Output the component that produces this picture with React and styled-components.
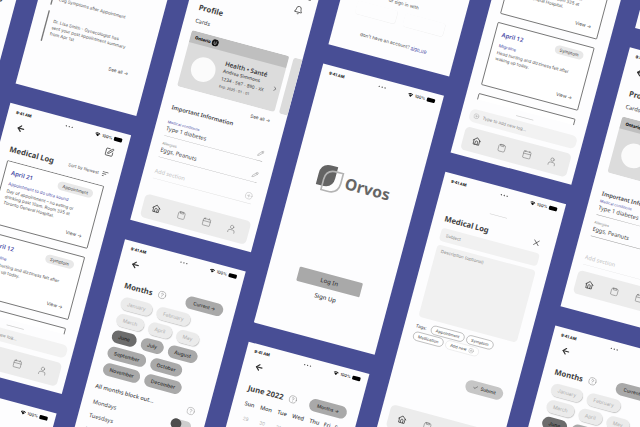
import React from "react";
import styled, { createGlobalStyle, css } from "styled-components";
import {
  ArrowLeft,
  SquarePen,
  Bell,
  Pencil,
  CircleHelp,
  CirclePlus,
  Check,
  ChevronRight,
  X,
} from "lucide-react";

const heading = '"Noto Sans", "Open Sans", sans-serif';
const body = 'Inter, "Liberation Sans", sans-serif';

const GlobalStyle = createGlobalStyle`
  *, *::before, *::after { box-sizing: border-box; }
  body { margin: 0; background: #484e95; }
  button, input, textarea { font: inherit; color: inherit; }
  h2, h3, p, ul { margin: 0; padding: 0; }
  a { color: inherit; text-decoration: none; }
`;

/* ---------- Board: rotated wall of 375px wide phone screens ---------- */

const Stage = styled.main`
  height: 100vh;
  overflow: hidden;
  background: #484e95;
`;

const Board = styled.div`
  display: flex;
  align-items: flex-start;
  gap: 63px;
  width: max-content;
  transform-origin: 0 0;
  transform: rotate(15deg) scale(calc(1 / 3)) translate(-328px, -1216px);
`;

const Column = styled.div`
  display: flex;
  flex-direction: column;
  gap: 60px;
  margin-top: ${(p) => p.$shift}px;
`;

const PhoneFrame = styled.section`
  display: flex;
  flex-direction: column;
  width: 375px;
  height: 804px;
  overflow: hidden;
  background: #fdfdfe;
  color: #3c3c3e;
  font-family: ${body};
  font-size: 13px;
  line-height: 18px;
`;

/* ---------- Status bar ---------- */

const StatusRow = styled.div`
  display: grid;
  grid-template-columns: 1fr auto 1fr;
  align-items: center;
  flex: none;
  height: 46px;
  padding: 0 22px 0 24px;
  color: #111;
  font-size: 12px;
  font-weight: 700;
`;

const Dots = styled.div`
  display: flex;
  gap: 5px;
  i {
    width: 4px;
    height: 4px;
    border-radius: 50%;
    background: #555;
  }
`;

const StatusRight = styled.div`
  display: flex;
  align-items: center;
  justify-content: flex-end;
  gap: 5px;
  font-weight: 500;
`;

const Battery = styled.span`
  width: 25px;
  height: 12px;
  border-radius: 3px;
  background: #000;
`;

function StatusBar() {
  return (
    <StatusRow>
      <span>9:41 AM</span>
      <Dots>
        <i />
        <i />
        <i />
      </Dots>
      <StatusRight>
        <svg width="17" height="13" viewBox="0 0 17 13" aria-hidden="true">
          <path d="M0.5 4 Q8.5 -3 16.5 4 L14.5 6 Q8.5 1 2.5 6 Z M3.5 7 Q8.5 3 13.5 7 L8.5 12.5 Z" fill="#111" />
        </svg>
        <span>100%</span>
        <Battery />
      </StatusRight>
    </StatusRow>
  );
}

function Phone({ label, children }) {
  return (
    <PhoneFrame aria-label={label}>
      <StatusBar />
      {children}
    </PhoneFrame>
  );
}

/* ---------- Shared parts ---------- */

const TopRow = styled.div`
  display: flex;
  align-items: center;
  justify-content: space-between;
  flex: none;
  height: 40px;
  padding: 0 36px;
`;

const IconButton = styled.button`
  display: flex;
  padding: 0;
  border: 0;
  background: none;
  color: ${(p) => p.$tone || "#333"};
`;

const TitleRow = styled.div`
  display: flex;
  align-items: center;
  gap: 16px;
  flex: none;
  height: 46px;
  margin-top: 24px;
  padding: 0 35px 0 34px;
`;

const Title = styled.h2`
  font-family: ${heading};
  font-size: 23px;
  font-weight: 700;
  line-height: 30px;
  color: #3d3d40;
  white-space: nowrap;
`;

const Spacer = styled.span`
  flex: 1;
`;

const TextLink = styled.a`
  font-family: ${body};
  font-size: 14px;
  line-height: 18px;
  color: #444;
  white-space: nowrap;
`;

const Handle = styled.div`
  flex: none;
  align-self: center;
  width: 54px;
  height: 2px;
  border-radius: 1px;
  background: #cfcfcf;
`;

const NavBar = styled.nav`
  display: flex;
  align-items: center;
  justify-content: space-between;
  flex: none;
  height: 72px;
  margin: auto 22px ${(p) => p.$bottom || 17}px 25px;
  padding: 0 38px 0 28px;
  border-radius: 14px;
  background: #ececec;
  a {
    display: flex;
  }
`;

function Stroke({ tone = "#777", width = 1.6, children }) {
  return (
    <svg
      width="28"
      height="28"
      viewBox="0 0 28 28"
      fill="none"
      stroke={tone}
      strokeWidth={width}
      strokeLinecap="round"
      strokeLinejoin="round"
      aria-hidden="true"
    >
      {children}
    </svg>
  );
}

function Navigation({ bottom }) {
  return (
    <NavBar $bottom={bottom}>
      <a href="#home" aria-label="Home">
        <Stroke tone="#333" width={2}>
          <path d="M3 13 L14 3.5 L25 13 M5.5 11.5 V24.5 H22.5 V11.5" />
          <path d="M10.5 24 V17 Q10.5 13.5 14 13.5 Q17.5 13.5 17.5 17 V24" />
        </Stroke>
      </a>
      <a href="#log" aria-label="Log">
        <Stroke>
          <rect x="4" y="5" width="20" height="20" rx="4" />
          <path d="M9 8 V4 H19 V8 Z" />
        </Stroke>
      </a>
      <a href="#calendar" aria-label="Calendar">
        <Stroke>
          <rect x="3" y="5" width="22" height="20" rx="2" />
          <path d="M3 12 H25 M8 2.5 V6 M20 2.5 V6" />
        </Stroke>
      </a>
      <a href="#me" aria-label="Me">
        <Stroke>
          <circle cx="14" cy="8.5" r="5" />
          <path d="M4.5 25.5 V22 Q4.5 17 10 17 H18 Q23.5 17 23.5 22 V25.5" />
        </Stroke>
      </a>
    </NavBar>
  );
}

function BackButton() {
  return (
    <IconButton aria-label="Back">
      <ArrowLeft size={29} strokeWidth={3} />
    </IconButton>
  );
}

/* ---------- Medical log ---------- */

const SortButton = styled.button`
  display: flex;
  align-items: center;
  gap: 10px;
  padding: 0;
  border: 0;
  background: none;
  color: #555;
  font-size: 13px;
  white-space: nowrap;
`;

const Feed = styled.div`
  display: flex;
  flex-direction: column;
  gap: 26px;
  flex: 1;
  min-height: 0;
  margin-top: 12px;
  padding: 0 39px 0 36px;
  overflow: hidden;
`;

const Entry = styled.article`
  display: flex;
  flex-direction: column;
  flex: none;
  height: 195px;
  padding: 18px 24px 21px 19px;
  border: 2px solid #444;
  border-radius: 3px;
  background: #fff;
  color: #555;
`;

const EntryHead = styled.div`
  display: flex;
  align-items: center;
  justify-content: space-between;
  height: 26px;
`;

const EntryDate = styled.h3`
  font-family: ${heading};
  font-size: 18px;
  font-weight: 600;
  color: #4b4ea6;
`;

const EntryTag = styled.span`
  padding: 4px 15px;
  border-radius: 13px;
  background: #e8e8e8;
  color: #444;
`;

const EntrySubject = styled.p`
  margin-top: 12px;
  color: #4b4ea6;
`;

const EntryText = styled.p`
  margin-top: 4px;
  margin-right: -12px;
  white-space: pre-line;
`;

const EntryFoot = styled.div`
  display: flex;
  justify-content: flex-end;
  margin-top: auto;
`;

const Composer = styled.div`
  display: flex;
  flex-direction: column;
  flex: none;
  height: 175px;
  padding-top: 16px;
`;

const QuickAdd = styled.label`
  display: flex;
  align-items: center;
  gap: 8px;
  height: 40px;
  margin: 12px 18px 0 26px;
  padding: 0 12px;
  border-radius: 16px;
  background: #f2f2f2;
  color: #999;
  input {
    flex: 1;
    min-width: 0;
    border: 0;
    background: none;
  }
  input::placeholder {
    color: #888;
    opacity: 1;
  }
`;

const entries = [
  {
    date: "April 21",
    tag: "Appointment",
    subject: "Appointment to do ultra sound",
    text: "Day of appointment – no eating or\ndrinking past 10am. Room 335 at\nToronto General Hospital.",
  },
  {
    date: "April 12",
    tag: "Symptom",
    subject: "Migraine",
    text: "Head hurting and dizziness felt after\nwaking up today.",
  },
  { date: "April 3", tag: "Medication", subject: "Refill", text: "Pick up the refill." },
];

function MedicalLog() {
  return (
    <Phone label="Medical Log">
      <TopRow>
        <BackButton />
        <IconButton aria-label="New entry">
          <SquarePen size={28} strokeWidth={1.8} />
        </IconButton>
      </TopRow>
      <TitleRow>
        <Title>Medical Log</Title>
        <Spacer />
        <SortButton>
          Sort by Newest
          <svg width="20" height="16" viewBox="0 0 20 16" stroke="#444" strokeWidth="2" aria-hidden="true">
            <path d="M1 2 H19 M1 8 H13 M1 14 H7" />
          </svg>
        </SortButton>
      </TitleRow>
      <Feed>
        {entries.map((e) => (
          <Entry key={e.date}>
            <EntryHead>
              <EntryDate>{e.date}</EntryDate>
              <EntryTag>{e.tag}</EntryTag>
            </EntryHead>
            <EntrySubject>{e.subject}</EntrySubject>
            <EntryText>{e.text}</EntryText>
            <EntryFoot>
              <TextLink href="#entry">View →</TextLink>
            </EntryFoot>
          </Entry>
        ))}
      </Feed>
      <Composer>
        <Handle />
        <QuickAdd>
          <CirclePlus size={18} strokeWidth={1.4} />
          <input placeholder="Type to add new log..." aria-label="Add new log" />
        </QuickAdd>
        <Navigation />
      </Composer>
    </Phone>
  );
}

/* ---------- Profile ---------- */

const SubTitle = styled.p`
  flex: none;
  margin-top: 7px;
  padding-left: 34px;
  font-family: ${heading};
  font-size: 17px;
  line-height: 24px;
`;

const CardStrip = styled.div`
  display: flex;
  gap: 14px;
  flex: none;
  height: 174px;
  margin-top: 19px;
  padding-left: 32px;
  overflow: hidden;
`;

const HealthCard = styled.article`
  flex: none;
  width: 302px;
  overflow: hidden;
  border-radius: 8px;
  background: #dcdcdc;
`;

const CardBand = styled.div`
  display: flex;
  align-items: center;
  gap: 3px;
  height: 37px;
  padding-left: 15px;
  background: #bfbfbf;
  color: #111;
  font-size: 13px;
  font-weight: 800;
`;

const CardBody = styled.div`
  display: flex;
  align-items: center;
  height: 137px;
  padding: 0 6px 0 26px;
`;

const Avatar = styled.div`
  flex: none;
  width: 74px;
  height: 74px;
  border-radius: 50%;
  background: #fbfbfb;
`;

const CardText = styled.div`
  flex: 1;
  margin-left: 22px;
  font-family: ${heading};
  font-size: 14px;
  line-height: 25px;
  white-space: nowrap;
`;

const CardName = styled.h3`
  font-size: 19px;
  font-weight: 600;
  line-height: 24px;
`;

const CardHolder = styled.p`
  font-weight: 500;
  line-height: 22px;
`;

const CardNote = styled.p`
  font-size: 11px;
  line-height: 22px;
`;

const LinkRow = styled.div`
  flex: none;
  margin-top: 20px;
  padding-right: 46px;
  text-align: right;
`;

const SectionTitle = styled.h3`
  flex: none;
  margin-top: 15px;
  padding-left: 33px;
  font-family: ${heading};
  font-size: 17px;
  font-weight: 600;
  line-height: 24px;
`;

const FieldList = styled.div`
  flex: none;
  margin: ${(p) => (p.$compact ? 0 : 22)}px 38px 0 33px;
`;

const Field = styled.label`
  display: grid;
  grid-template-columns: 1fr auto;
  align-content: end;
  align-items: center;
  height: ${(p) => (p.$tall ? 88 : 66)}px;
  padding-bottom: 10px;
  border-bottom: 1px solid ${(p) => (p.$muted ? "#ddd" : "#999")};
  color: ${(p) => (p.$muted ? "#c4c4c4" : "#666")};
  &:first-child {
    height: 54px;
  }
  small {
    grid-column: 1 / -1;
    font-size: 11px;
    line-height: 16px;
    color: ${(p) => (p.$accent ? "#4b4ea6" : "#888")};
  }
  input {
    min-width: 0;
    padding: 0;
    border: 0;
    background: none;
    font-family: ${heading};
    font-size: 17px;
    line-height: 24px;
    color: ${(p) => (p.$muted ? "#c4c4c4" : "#444")};
  }
  input::placeholder {
    color: #c4c4c4;
    opacity: 1;
  }
`;

function Profile({ compact = false }) {
  return (
    <Phone label="Profile">
      <TopRow>
        <BackButton />
        <IconButton aria-label="Notifications">
          <Bell size={28} strokeWidth={1.8} />
        </IconButton>
      </TopRow>
      <TitleRow>
        <Title>Profile</Title>
      </TitleRow>
      <SubTitle>Cards</SubTitle>
      <CardStrip>
        <HealthCard>
          <CardBand>
            Ontario
            <svg width="22" height="22" viewBox="0 0 22 22" aria-hidden="true">
              <circle cx="11" cy="11" r="10.5" fill="#111" />
              <path
                d="M11 17 C6 15 5 11 8 9 C10 10 11 13 11 17 C11 13 12 10 14 9 C17 11 16 15 11 17 Z M6 6 L9 8 M16 6 L13 8"
                fill="none"
                stroke="#bfbfbf"
                strokeWidth="1.2"
              />
            </svg>
          </CardBand>
          <CardBody>
            <Avatar />
            <CardText>
              <CardName>Health • Santé</CardName>
              <CardHolder>Andrea Simmons</CardHolder>
              <p>1234 - 567 - 890 - XX</p>
              <CardNote>Exp. 2025 - 01 - 01</CardNote>
            </CardText>
            <ChevronRight size={20} strokeWidth={1.8} />
          </CardBody>
        </HealthCard>
        <HealthCard />
      </CardStrip>
      <LinkRow>
        <TextLink href="#cards">See all →</TextLink>
      </LinkRow>
      <SectionTitle>Important Information</SectionTitle>
      <FieldList $compact={compact}>
        <Field $accent>
          <small>Medical conditions</small>
          <input defaultValue="Type 1 diabetes" />
          <Pencil size={20} strokeWidth={1.2} />
        </Field>
        <Field>
          <small>Allergies</small>
          <input defaultValue="Eggs, Peanuts" />
          <Pencil size={20} strokeWidth={1.2} />
        </Field>
        <Field $muted $tall={compact}>
          <input placeholder="Add section" aria-label="Add section" />
          <CirclePlus size={24} strokeWidth={1.2} color="#aaa" />
        </Field>
      </FieldList>
      <Navigation bottom={compact ? 48 : 17} />
    </Phone>
  );
}

/* ---------- Months ---------- */

const PillButton = styled.button`
  display: flex;
  align-items: center;
  justify-content: center;
  gap: 8px;
  flex: none;
  min-width: 116px;
  height: 38px;
  padding: 0 20px;
  border: 0;
  border-radius: 19px;
  background: ${(p) => (p.$light ? "#c6c6c6" : "#a9a9a9")};
  color: #333;
  font-size: 14px;
  font-weight: 500;
`;

const MonthRows = styled.div`
  display: flex;
  flex-direction: column;
  gap: 12px;
  flex: none;
  margin-top: 11px;
  padding: 0 34px 0 37px;
`;

const MonthRow = styled.div`
  display: flex;
  gap: 14px;
`;

const monthTones = {
  off: css`
    background: #ebebeb;
    color: #b0b0b0;
    box-shadow: 2px 2px 3px #c4c4c4;
  `,
  on: css`
    background: #a9a9a9;
    color: #2e2e2e;
    font-weight: 500;
  `,
  current: css`
    background: #6c6c6c;
    color: #1c1c1c;
    font-weight: 500;
  `,
};

const Month = styled.button`
  height: 39px;
  padding: 0 20px;
  border: 0;
  border-radius: 20px;
  font-size: 15px;
  ${(p) => monthTones[p.$tone]}
`;

const BlockHead = styled.div`
  display: flex;
  align-items: center;
  justify-content: space-between;
  flex: none;
  height: 30px;
  margin-top: 22px;
  padding: 0 38px 0 28px;
  font-family: ${heading};
  font-size: 17px;
  font-weight: 500;
  line-height: 24px;
`;

const DayRow = styled.label`
  display: flex;
  align-items: center;
  justify-content: space-between;
  flex: none;
  height: 42px;
  margin-top: ${(p) => (p.$first ? 12 : 0)}px;
  padding: 0 38px 0 33px;
  font-family: ${heading};
  font-size: 17px;
`;

const Switch = styled.input`
  appearance: none;
  display: flex;
  align-items: center;
  width: 62px;
  height: 30px;
  margin: 0;
  border-radius: 15px;
  background: #cdcdcd;
  &::before {
    content: "";
    width: 32px;
    height: 32px;
    border-radius: 50%;
    background: #4d4d4d;
  }
`;

const monthRows = [
  [["January", "off"], ["February", "off"]],
  [["March", "off"], ["April", "off"], ["May", "off"]],
  [["June", "current"], ["July", "on"], ["August", "on"]],
  [["September", "on"], ["October", "on"]],
  [["November", "on"], ["December", "on"]],
];

const weekdays = ["Mondays", "Tuesdays", "Wednesdays", "Thursdays"];

function Months() {
  return (
    <Phone label="Months">
      <TopRow>
        <BackButton />
      </TopRow>
      <TitleRow>
        <Title>Months</Title>
        <IconButton aria-label="Help" $tone="#888">
          <CircleHelp size={26} strokeWidth={1.4} />
        </IconButton>
        <Spacer />
        <PillButton>Current →</PillButton>
      </TitleRow>
      <MonthRows>
        {monthRows.map((row) => (
          <MonthRow key={row[0][0]}>
            {row.map(([name, tone]) => (
              <Month key={name} $tone={tone}>
                {name}
              </Month>
            ))}
          </MonthRow>
        ))}
      </MonthRows>
      <BlockHead>
        All months block out...
        <IconButton aria-label="Help" $tone="#999">
          <CircleHelp size={26} strokeWidth={1.4} />
        </IconButton>
      </BlockHead>
      {weekdays.map((day, i) => (
        <DayRow key={day} $first={i === 0}>
          {day}
          <Switch type="checkbox" />
        </DayRow>
      ))}
    </Phone>
  );
}

/* ---------- Calendar ---------- */

const MonthTable = styled.table`
  flex: none;
  table-layout: fixed;
  margin: 10px 28px 0;
  border-collapse: collapse;
  text-align: center;
  th {
    height: 30px;
    padding: 0;
    font-family: ${heading};
    font-size: 17px;
    font-weight: 500;
  }
  td {
    height: 60px;
    padding: 0;
    color: #b5b5b5;
    font-size: 14px;
  }
`;

const weeks = [
  [29, 30, 31, 1, 2, 3, 4],
  [5, 6, 7, 8, 9, 10, 11],
  [12, 13, 14, 15, 16, 17, 18],
];

function Calendar() {
  return (
    <Phone label="June 2022">
      <TopRow>
        <BackButton />
      </TopRow>
      <TitleRow>
        <Title>June 2022</Title>
        <IconButton aria-label="Help" $tone="#888">
          <CircleHelp size={26} strokeWidth={1.4} />
        </IconButton>
        <Spacer />
        <PillButton>Months →</PillButton>
      </TitleRow>
      <MonthTable>
        <thead>
          <tr>
            {["Sun", "Mon", "Tue", "Wed", "Thu", "Fri", "Sat"].map((d) => (
              <th key={d}>{d}</th>
            ))}
          </tr>
        </thead>
        <tbody>
          {weeks.map((week) => (
            <tr key={week[0]}>
              {week.map((d) => (
                <td key={d}>{d}</td>
              ))}
            </tr>
          ))}
        </tbody>
      </MonthTable>
    </Phone>
  );
}

/* ---------- Welcome and sign in ---------- */

const Brand = styled.div`
  display: flex;
  align-items: center;
  gap: 7px;
  flex: none;
  height: 90px;
  margin-top: 238px;
  padding-left: 70px;
  font-family: ${heading};
  font-size: 47px;
  font-weight: 700;
  line-height: 60px;
  color: #666;
`;

const WelcomeActions = styled.div`
  display: flex;
  flex-direction: column;
  align-items: center;
  gap: 18px;
  margin-top: 232px;
  font-family: ${heading};
  font-size: 18px;
  font-weight: 500;
`;

const LoginButton = styled.button`
  width: 196px;
  height: 44px;
  border: 0;
  border-radius: 4px;
  background: #a9a9a9;
`;

function Welcome() {
  return (
    <Phone label="Welcome">
      <Brand>
        <svg width="80" height="86" viewBox="0 0 80 86" aria-hidden="true">
          <path d="M2 69 V35 Q2 3 36 3 H54 V38 Q54 69 20 69 Z" fill="#646464" />
          <path d="M21 81 V48 Q22 18 54 18 H74 V50 Q73 81 41 81 Z" fill="none" stroke="#b4b4b4" strokeWidth="5" />
        </svg>
        Orvos
      </Brand>
      <WelcomeActions>
        <LoginButton>Log In</LoginButton>
        <a href="#signup">Sign Up</a>
      </WelcomeActions>
    </Phone>
  );
}

const SignInFoot = styled.div`
  display: flex;
  flex-direction: column;
  align-items: center;
  margin-top: auto;
  padding-bottom: 45px;
  color: #555;
  font-size: 14px;
  a {
    color: #4b4ea6;
    text-decoration: underline;
  }
`;

const SocialRow = styled.div`
  display: flex;
  gap: 24px;
  margin: 16px 0 47px;
`;

const SocialButton = styled.button`
  width: 124px;
  height: 40px;
  border: 0;
  border-radius: 8px;
  background: #fdfdfe;
  box-shadow: 1px 1px 2px #ececec;
`;

function SignIn() {
  return (
    <Phone label="Sign in">
      <SignInFoot>
        <p>or sign in with</p>
        <SocialRow>
          <SocialButton aria-label="First provider" />
          <SocialButton aria-label="Second provider" />
        </SocialRow>
        <p>
          don’t have an account? <a href="#signup">sign up</a>
        </p>
      </SignInFoot>
    </Phone>
  );
}

/* ---------- Home ---------- */

const HomeFoot = styled.div`
  display: flex;
  flex-direction: column;
  gap: 18px;
  margin-top: auto;
  padding: 0 46px 106px 39px;
`;

const Notice = styled.p`
  display: flex;
  align-items: center;
  height: ${(p) => (p.$tall ? 94 : 44)}px;
  padding-left: 18px;
  border-left: 4px solid #777;
  color: #555;
  font-size: 13px;
  line-height: 19px;
  white-space: pre;
`;

const HomeLink = styled.div`
  margin-top: 2px;
  padding-right: 10px;
  text-align: right;
`;

function Home() {
  return (
    <Phone label="Home">
      <HomeFoot>
        <Notice>Log Symptoms after Appointment</Notice>
        <Notice $tall>
          {"Dr. Lisa Smith - Gynecologist has\nsent your post appointment summary\nfrom Apr 1st"}
        </Notice>
        <HomeLink>
          <TextLink href="#notices">See all →</TextLink>
        </HomeLink>
      </HomeFoot>
    </Phone>
  );
}

const Greeting = styled(Title)`
  margin: 380px 36px 0 auto;
`;

function Today() {
  return (
    <Phone label="Today">
      <Greeting>Today</Greeting>
    </Phone>
  );
}

/* ---------- New log entry ---------- */

const FormHandle = styled(Handle)`
  margin-top: 40px;
`;

const FormTitleRow = styled(TitleRow)`
  padding-right: 42px;
`;

const SubjectInput = styled.input`
  flex: none;
  height: 40px;
  margin: 6px 37px 0 34px;
  padding: 0 17px;
  border: 0;
  border-radius: 12px;
  background: #f1f1f1;
  &::placeholder {
    color: #888;
    opacity: 1;
  }
`;

const DescriptionInput = styled.textarea`
  flex: none;
  height: 224px;
  margin: 12px 36px 0 34px;
  padding: 8px 15px;
  border: 0;
  border-radius: 12px;
  background: #f1f1f1;
  resize: none;
  &::placeholder {
    color: #888;
    opacity: 1;
  }
`;

const TagRow = styled.div`
  display: flex;
  align-items: center;
  gap: 7px;
  flex: none;
  margin: ${(p) => (p.$first ? 14 : 4)}px 0 0 34px;
`;

const TagLabel = styled.span`
  width: 40px;
`;

const TagButton = styled.button`
  display: flex;
  align-items: center;
  gap: 6px;
  height: 27px;
  padding: 0 14px;
  border: 1px solid ${(p) => (p.$ghost ? "#d4d4d4" : "#555")};
  border-radius: 14px;
  background: #fff;
  font-size: 12px;
`;

const SubmitRow = styled.div`
  display: flex;
  justify-content: flex-end;
  margin-top: 71px;
  padding-right: 35px;
`;

function NewLog() {
  return (
    <Phone label="New log">
      <FormHandle />
      <FormTitleRow>
        <Title>Medical Log</Title>
        <Spacer />
        <IconButton aria-label="Close">
          <X size={28} strokeWidth={1.6} />
        </IconButton>
      </FormTitleRow>
      <SubjectInput placeholder="Subject" aria-label="Subject" />
      <DescriptionInput placeholder="Description (optional)" aria-label="Description" />
      <TagRow $first>
        <TagLabel>Tags:</TagLabel>
        <TagButton>Appointment</TagButton>
        <TagButton>Symptom</TagButton>
      </TagRow>
      <TagRow>
        <TagButton>Medication</TagButton>
        <TagButton $ghost>
          Add new <CirclePlus size={17} strokeWidth={1.4} color="#888" />
        </TagButton>
      </TagRow>
      <SubmitRow>
        <PillButton $light>
          <Check size={16} strokeWidth={1.8} />
          Submit
        </PillButton>
      </SubmitRow>
      <Navigation />
    </Phone>
  );
}

export default function App() {
  return (
    <>
      <GlobalStyle />
      <Stage>
        <Board>
          <Column $shift={765}>
            <Today />
          </Column>
          <Column $shift={642}>
            <Home />
            <MedicalLog />
            <Months />
          </Column>
          <Column $shift={948}>
            <Profile />
            <Months />
          </Column>
          <Column $shift={285}>
            <SignIn />
            <Welcome />
            <Calendar />
          </Column>
          <Column $shift={504}>
            <MedicalLog />
            <NewLog />
          </Column>
          <Column $shift={0}>
            <Home />
            <Profile compact />
            <Months />
          </Column>
        </Board>
      </Stage>
    </>
  );
}
